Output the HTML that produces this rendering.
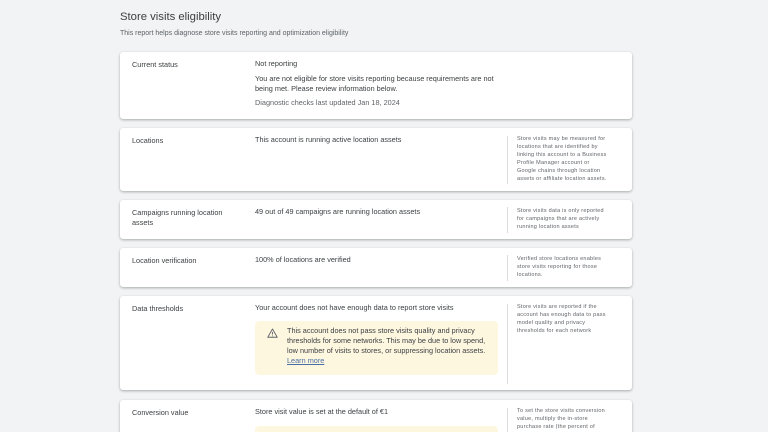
<!DOCTYPE html>
<html style="width:768px;height:432px;overflow:hidden"><head><meta charset="utf-8"><style>
*{margin:0;padding:0;box-sizing:border-box}
body{width:768px;height:432px;overflow:hidden;background:#f1f3f4;font-family:"Liberation Sans",sans-serif;color:#3c4043;position:relative}
.a{position:absolute;white-space:nowrap}
.card{position:absolute;left:120px;width:512px;background:#fff;border-radius:3px;box-shadow:0 1px 2px rgba(60,64,67,.3),0 1px 3px rgba(60,64,67,.12)}
.lbl{position:absolute;left:12px;font-size:7.3px;color:#3c4043}
.val{position:absolute;left:135px;font-size:7.3px;color:#3c4043;line-height:10px}
.div{position:absolute;left:387px;width:1px;background:#dadce0}
.side{position:absolute;left:397px;font-size:5.5px;letter-spacing:0.25px;line-height:8px;color:#5f6368;white-space:nowrap}
.warn{position:absolute;left:135px;width:243px;background:#fef7e0;border-radius:4px}
</style></head><body>
<div class="a" style="left:120px;top:11px;font-size:11.3px;color:#3c4043">Store visits eligibility</div>
<div class="a" style="left:120px;top:30px;font-size:7px;color:#5f6368">This report helps diagnose store visits reporting and optimization eligibility</div>

<div class="card" style="top:52px;height:67px">
<div class="lbl" style="top:8px">Current status</div>
<div class="val" style="top:7px">Not reporting</div>
<div class="val" style="top:22px">You are not eligible for store visits reporting because requirements are not<br>being met. Please review information below.</div>
<div class="val" style="top:46px;color:#5f6368">Diagnostic checks last updated Jan 18, 2024</div>
</div>

<div class="card" style="top:128px;height:63px">
<div class="lbl" style="top:8px">Locations</div>
<div class="val" style="top:7px">This account is running active location assets</div>
<div class="div" style="top:8px;height:48px"></div>
<div class="side" style="top:7px">Store visits may be measured for<br>locations that are identified by<br>linking this account to a Business<br>Profile Manager account or<br>Google chains through location<br>assets or affiliate location assets.</div>
</div>

<div class="card" style="top:200px;height:39px">
<div class="lbl" style="top:8px;line-height:10px">Campaigns running location<br>assets</div>
<div class="val" style="top:7px">49 out of 49 campaigns are running location assets</div>
<div class="div" style="top:7px;height:26px"></div>
<div class="side" style="top:7px">Store visits data is only reported<br>for campaigns that are actively<br>running location assets</div>
</div>

<div class="card" style="top:248px;height:39px">
<div class="lbl" style="top:8px">Location verification</div>
<div class="val" style="top:7px">100% of locations are verified</div>
<div class="div" style="top:7px;height:26px"></div>
<div class="side" style="top:7px">Verified store locations enables<br>store visits reporting for those<br>locations.</div>
</div>

<div class="card" style="top:296px;height:94px">
<div class="lbl" style="top:8px">Data thresholds</div>
<div class="val" style="top:7px">Your account does not have enough data to report store visits</div>
<div class="warn" style="top:25px;height:54px">
<svg style="position:absolute;left:12px;top:7px" width="11" height="10" viewBox="0 0 22 20"><path d="M11 2 L20.5 18.5 H1.5 Z" fill="none" stroke="#5f6368" stroke-width="1.8" stroke-linejoin="round"/><path d="M11 8v5M11 15v1.5" stroke="#5f6368" stroke-width="1.8"/></svg>
<div class="a" style="left:32px;top:5px;font-size:7.3px;line-height:10px;color:#3c4043">This account does not pass store visits quality and privacy<br>thresholds for some networks. This may be due to low spend,<br>low number of visits to stores, or suppressing location assets.<br><span style="text-decoration:underline;color:#4a6fa5">Learn more</span></div>
</div>
<div class="div" style="top:8px;height:80px"></div>
<div class="side" style="top:7px">Store visits are reported if the<br>account has enough data to pass<br>model quality and privacy<br>thresholds for each network</div>
</div>

<div class="card" style="top:400px;height:40px">
<div class="lbl" style="top:8px">Conversion value</div>
<div class="val" style="top:7px">Store visit value is set at the default of €1</div>
<div class="warn" style="top:26px;height:20px"></div>
<div class="div" style="top:8px;height:40px"></div>
<div class="side" style="top:7px">To set the store visits conversion<br>value, multiply the in-store<br>purchase rate (the percent of</div>
</div>
</body></html>
